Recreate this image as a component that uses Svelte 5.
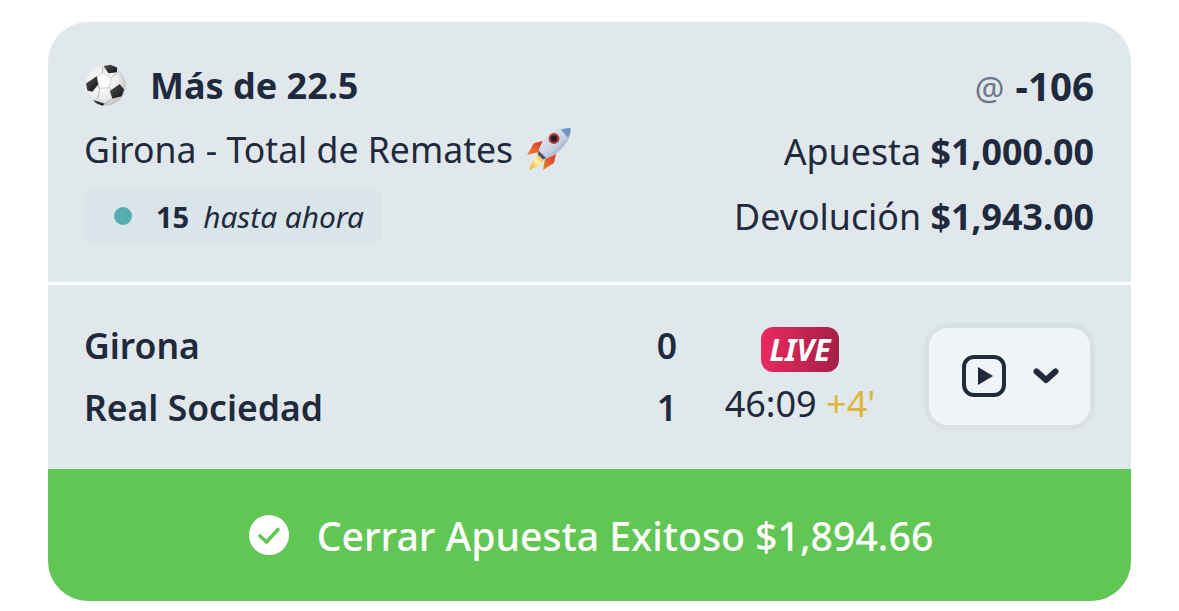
<script lang="ts">
	const teams = [
		{ name: 'Girona', score: 0 },
		{ name: 'Real Sociedad', score: 1 }
	];
</script>

<div class="page">
	<div class="card">
		<section class="bet">
			<div class="left">
				<div class="pick">
					<svg class="ball" viewBox="0 0 44 44" aria-hidden="true">
						<defs>
							<radialGradient id="ballFill" cx="0.4" cy="0.42" r="0.68">
								<stop offset="0" stop-color="#ffffff" />
								<stop offset="0.6" stop-color="#ededed" />
								<stop offset="1" stop-color="#b4b4b4" />
							</radialGradient>
							<linearGradient id="patch" x1="0" y1="0" x2="1" y2="1">
								<stop offset="0" stop-color="#555" />
								<stop offset="1" stop-color="#0e0e0e" />
							</linearGradient>
						</defs>
						<circle cx="22" cy="22" r="20.8" fill="url(#ballFill)" />
						<path d="M19 9 L28 14 L26 24 L16 25 L13 14 Z" fill="#fbfbfb" />
						<path d="M19 9 L19 3 M28 14 L34 9 M26 24 L29 28 M16 25 L14 21 M16 25 L14 36 M13 14 L13 12.5 M29 35.5 L21 41" stroke="#a8a8a8" stroke-width="0.8" fill="none" />
						<path d="M19 9 L28 14 L26 24 L16 25 L13 14 Z" fill="none" stroke="#b8b8b8" stroke-width="0.6" />
						<path d="M20 2 L27 0.8 L34 3.5 L33.5 8.5 L25 9.5 Z" fill="url(#patch)" />
						<path d="M13 12.5 L14.5 21 L8.5 28.5 L3.5 27 L2 20 Z" fill="url(#patch)" />
						<path d="M36.5 20.5 L41 26 L38.5 33 L29 35.5 L26.5 27.5 Z" fill="url(#patch)" />
						<path d="M9.5 36.5 L21 40.8 L19 42.6 L12 40 Z" fill="url(#patch)" />
					</svg>
					<span>Más de 22.5</span>
				</div>
				<div class="market">
					<span>Girona - Total de Remates</span>
					<svg class="rocket" viewBox="0 0 46 44" aria-hidden="true">
						<defs>
							<linearGradient id="hull" x1="0" y1="0" x2="1" y2="1">
								<stop offset="0" stop-color="#f1f3f6" />
								<stop offset="0.55" stop-color="#c6d2e0" />
								<stop offset="1" stop-color="#5e7ea8" />
							</linearGradient>
							<linearGradient id="flame" x1="0" y1="1" x2="1" y2="0">
								<stop offset="0" stop-color="#e9a52c" />
								<stop offset="0.55" stop-color="#fdf1a6" />
								<stop offset="1" stop-color="#f29a2a" />
							</linearGradient>
							<linearGradient id="fin" x1="0" y1="1" x2="1" y2="0">
								<stop offset="0" stop-color="#f0862f" />
								<stop offset="1" stop-color="#d5352a" />
							</linearGradient>
						</defs>
						<path d="M17 14 L8 16 L1 28 L13 25 Z" fill="url(#fin)" />
						<path d="M30 27 L28 36 L17 43 L19 32 Z" fill="url(#fin)" />
						<path d="M12 27 L18 33 L14 38 L3 43 L7 33 Z" fill="url(#flame)" />
						<path d="M44.5 1 C36 0 26 3 20 10 C16 15 13 20 12 27 L17 32 C24 31 31 27 36 21 C42 15 45.5 8 44.5 1 Z" fill="url(#hull)" />
						<path d="M44.5 1 C41 1 38 1.5 35 3 L42 10.5 C44 7.5 45 4 44.5 1 Z" fill="#6e95c8" />
						<circle cx="28" cy="11.5" r="5.4" fill="#a93b3a" />
						<circle cx="28" cy="11.5" r="3.2" fill="#2c1d24" />
						<path d="M13 24 L20 31 L17 32.5 L11.5 27 Z" fill="#47546a" />
					</svg>
				</div>
				<div class="progress">
					<span class="dot"></span>
					<strong>15</strong>
					<em>hasta ahora</em>
				</div>
			</div>
			<div class="right">
				<div class="odds"><span class="at">@</span> <strong>-106</strong></div>
				<div class="amount">Apuesta <strong>$1,000.00</strong></div>
				<div class="amount">Devolución <strong>$1,943.00</strong></div>
			</div>
		</section>

		<section class="match">
			<div class="teams">
				{#each teams as team}
					<div class="team">
						<span>{team.name}</span>
						<span class="score">{team.score}</span>
					</div>
				{/each}
			</div>
			<div class="clock">
				<span class="live">LIVE</span>
				<span class="time">46:09 <span class="extra">+4'</span></span>
			</div>
			<button class="watch" type="button" aria-label="Ver partido">
				<svg class="play" viewBox="0 0 44 42" aria-hidden="true">
					<rect x="2" y="2" width="40" height="38" rx="10" fill="none" stroke="#1f2a3d" stroke-width="4" />
					<path d="M16 12 L31 21 L16 30 Z" fill="#1f2a3d" />
				</svg>
				<svg class="chev" viewBox="0 0 26 16" aria-hidden="true">
					<path d="M3.5 3.5 L13 12 L22.5 3.5" fill="none" stroke="#1f2a3d" stroke-width="6" stroke-linecap="round" stroke-linejoin="round" />
				</svg>
			</button>
		</section>

		<section class="cashout">
			<svg class="check" viewBox="0 0 40 40" aria-hidden="true">
				<circle cx="20" cy="20" r="20" fill="#fff" />
				<path d="M11 21 L17.5 27 L29 14.5" fill="none" stroke="#62c655" stroke-width="3.6" stroke-linecap="round" stroke-linejoin="round" />
			</svg>
			<span>Cerrar Apuesta Exitoso $1,894.66</span>
		</section>
	</div>
</div>

<style>
	:global(body) {
		margin: 0;
		background: #fff;
	}

	.page {
		padding: 22px 48px 10px;
		font-family: 'Noto Sans', 'Open Sans', sans-serif;
		color: #1f2a3d;
	}

	.card {
		background: #e1e8ec;
		border-radius: 40px;
		overflow: hidden;
	}

	.bet {
		display: flex;
		justify-content: space-between;
		height: 263px;
		box-sizing: border-box;
		padding: 41px 37px 0 36px;
		border-bottom: 3px solid #fff;
	}

	.left {
		display: flex;
		flex-direction: column;
		align-items: flex-start;
	}

	.pick {
		display: flex;
		align-items: center;
		gap: 23px;
		height: 44px;
		font-size: 36px;
		font-weight: 700;
	}

	.ball {
		width: 43px;
		height: 43px;
	}

	.market {
		display: flex;
		align-items: center;
		gap: 13px;
		height: 44px;
		margin-top: 20px;
		font-size: 35.6px;
	}

	.rocket {
		width: 46px;
		height: 44px;
	}

	.progress {
		display: flex;
		align-items: center;
		box-sizing: border-box;
		height: 60px;
		margin-top: 15px;
		padding: 0 18px 0 30px;
		background: #d9e5e9;
		border-radius: 12px;
		font-size: 29px;
	}

	.dot {
		width: 18px;
		height: 18px;
		border-radius: 50%;
		background: #56aeb0;
		margin-right: 24px;
	}

	.progress em {
		margin-left: 14px;
		font-size: 29.8px;
	}

	.right {
		display: flex;
		flex-direction: column;
		align-items: flex-end;
		padding-top: 1px;
		font-size: 35.8px;
	}

	.odds,
	.amount {
		height: 44px;
		line-height: 44px;
	}

	.odds strong {
		font-size: 38.5px;
		margin-left: 2px;
	}

	.amount {
		margin-top: 21px;
	}

	.at {
		color: #6c7787;
		font-size: 33px;
	}

	.match {
		display: flex;
		align-items: center;
		box-sizing: border-box;
		height: 184px;
		padding: 0 36px 2px 36px;
	}

	.teams {
		width: 593px;
		display: flex;
		flex-direction: column;
		gap: 17px;
		font-size: 35.5px;
		font-weight: 600;
		color: #1f2a3d;
	}

	.team {
		display: flex;
		justify-content: space-between;
		height: 45px;
		line-height: 45px;
	}

	.clock {
		width: 150px;
		margin-left: 48px;
		display: flex;
		flex-direction: column;
		align-items: center;
		gap: 10px;
		margin-top: 1px;
	}

	.live {
		width: 78px;
		height: 45px;
		line-height: 45px;
		text-align: center;
		border-radius: 12px;
		background: linear-gradient(90deg, #ea2a5e, #a51f48);
		color: #fff;
		font-size: 30px;
		font-weight: 700;
		font-style: italic;
	}

	.time {
		font-size: 36px;
		line-height: 44px;
		white-space: nowrap;
	}

	.extra {
		color: #e0b53a;
	}

	.watch {
		margin-left: auto;
		width: 171px;
		height: 107px;
		box-sizing: border-box;
		display: flex;
		align-items: center;
		justify-content: center;
		gap: 27px;
		padding: 0 0 0 2px;
		background: #f1f4f6;
		border: 5px solid #dae1e5;
		border-radius: 24px;
	}

	.play {
		width: 44px;
		height: 42px;
	}

	.chev {
		width: 26px;
		height: 16px;
	}

	.cashout {
		display: flex;
		align-items: center;
		justify-content: center;
		gap: 28px;
		height: 132px;
		padding-left: 3px;
		background: #62c655;
		color: #fff;
		font-size: 39.2px;
		font-weight: 500;
	}

	.check {
		width: 40px;
		height: 40px;
	}
</style>
